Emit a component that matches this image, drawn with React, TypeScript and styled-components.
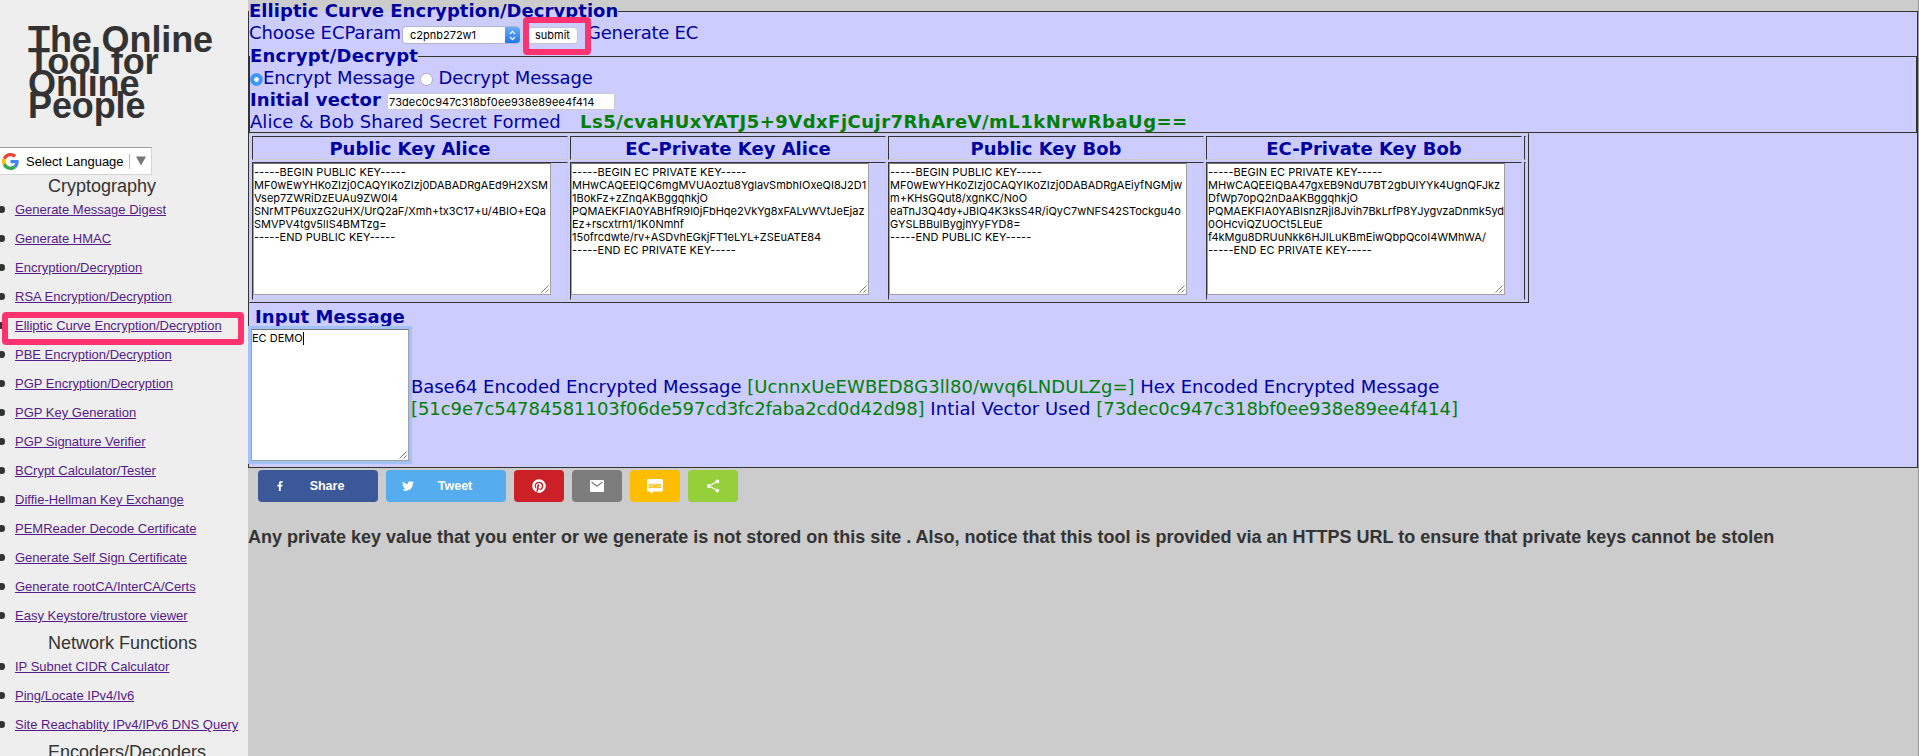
import React from "react";
import styled, { createGlobalStyle } from "styled-components";
import { FaPinterest } from "react-icons/fa";

const GlobalStyle = createGlobalStyle`
  html, body { margin: 0; padding: 0; overflow: hidden; }
  * { box-sizing: border-box; }
  body { font-family: "Liberation Sans", Helvetica, Arial, sans-serif; color: #333; }
`;

const Page = styled.div`
  display: flex;
  width: 100%;
  height: 756px;
  overflow: hidden;
  background: #ccc;
`;

const Sidebar = styled.aside`
  flex: none;
  width: 248px;
  height: 756px;
  overflow: hidden;
  background: #eee;
`;

const SiteTitle = styled.h1`
  margin: 0;
  padding: 29px 0 0 28px;
  height: 147px;
  width: 230px;
  font-size: 36px;
  line-height: 22px;
  font-weight: bold;
  letter-spacing: -0.1px;
`;

const LanguagePicker = styled.div`
  display: flex;
  align-items: center;
  width: 152px;
  height: 28px;
  background: #fff;
  border: 1px solid #d5d5d5;
  border-top-color: #9b9b9b;
  border-left: 0;
  font-size: 13px;
  color: #000;
  svg { margin-left: 2px; }
`;

const LanguageLabel = styled.span`
  width: 97px;
  margin-left: 7px;
  white-space: nowrap;
`;

const LanguageArrow = styled.span`
  margin-left: 6px;
  padding-left: 4px;
  height: 15px;
  border-left: 1px solid #bbb;
  display: flex;
  align-items: center;
`;

const SectionTitle = styled.h3`
  margin: 0;
  padding-left: 48px;
  height: 22px;
  font-size: 18px;
  line-height: 22px;
  font-weight: normal;
  white-space: nowrap;
`;

const LinkList = styled.ul`
  margin: 0;
  padding: 0;
  list-style: none;
`;

const LinkItem = styled.li`
  position: relative;
  height: 29px;
  padding-left: 15px;
  font-size: 13px;
  line-height: 25px;
  white-space: nowrap;
  &::before {
    content: "";
    position: absolute;
    left: -2px;
    top: 9px;
    width: 6.5px;
    height: 6.5px;
    border-radius: 50%;
    background: #333;
  }
`;

const NavLink = styled.a`
  color: #551a8b;
  text-decoration: underline;
`;

const Marker = styled.span<{ $x: number; $y: number; $w: number; $h: number }>`
  position: absolute;
  left: ${(p) => p.$x}px;
  top: ${(p) => p.$y}px;
  width: ${(p) => p.$w}px;
  height: ${(p) => p.$h}px;
  border: 6.5px solid #ff3370;
  border-radius: 4px;
  pointer-events: none;
`;

const Main = styled.main`
  flex: 1;
  min-width: 0;
  height: 756px;
  border-right: 1px solid #999;
`;

const Group = styled.fieldset<{ $height: number }>`
  margin: 0;
  padding: 0;
  min-width: 0;
  border: 1px solid #333;
  background: #ccf;
  color: #0000a0;
  font-family: "DejaVu Sans", Verdana, sans-serif;
  font-size: 18px;
  line-height: 22px;
  height: ${(p) => p.$height}px;
`;

const GroupTitle = styled.legend<{ $track: number }>`
  padding: 0;
  height: 22px;
  line-height: 22px;
  font-weight: bold;
  white-space: nowrap;
  letter-spacing: ${(p) => p.$track}px;
`;

const Row = styled.div<{ $tall?: boolean }>`
  position: relative;
  display: flex;
  align-items: flex-start;
  height: ${(p) => (p.$tall ? 23 : 22)}px;
  white-space: nowrap;
`;

const Txt = styled.span<{ $w?: number; $track?: number; $bold?: boolean; $green?: boolean }>`
  flex: none;
  width: ${(p) => (p.$w ? p.$w + "px" : "auto")};
  letter-spacing: ${(p) => p.$track ?? 0}px;
  font-weight: ${(p) => (p.$bold ? "bold" : "normal")};
  color: ${(p) => (p.$green ? "#008000" : "inherit")};
`;

const SelectBox = styled.div`
  display: flex;
  align-items: center;
  justify-content: space-between;
  width: 118px;
  height: 18px;
  margin-top: 4px;
  padding-left: 7px;
  overflow: hidden;
  border: 1px solid #b4b4c8;
  border-right: 0;
  border-radius: 4px;
  background: #fff;
  color: #000;
  font: 11px/16px Inter, sans-serif;
`;

const SelectArrows = styled.span`
  display: flex;
  align-items: center;
  justify-content: center;
  width: 15px;
  height: 18px;
  background: linear-gradient(#6bb0fa, #1a74f5);
`;

const SubmitButton = styled.span`
  display: flex;
  align-items: center;
  justify-content: center;
  width: 51px;
  height: 17px;
  margin: 5px 9px 0 7px;
  border: 1px solid #c4c4d4;
  border-radius: 4px;
  background: #fff;
  color: #000;
  font: 11px/15px Inter, sans-serif;
`;

const Radio = styled.span<{ $on?: boolean }>`
  flex: none;
  width: 13px;
  height: 13px;
  margin-top: 6px;
  border-radius: 50%;
  border: 1px solid ${(p) => (p.$on ? "#3b96fb" : "#b0b0bc")};
  background: ${(p) => (p.$on ? "radial-gradient(circle, #fff 0 2px, #3b99fc 2.6px)" : "#fff")};
`;

const VectorInput = styled.span`
  width: 228px;
  height: 17px;
  margin-top: 4px;
  padding-left: 1px;
  border: 1px solid #ccc;
  background: #fff;
  color: #000;
  font: 11px/16px Inter, sans-serif;
  letter-spacing: 0.1px;
`;

const KeyTable = styled.table`
  width: 1280px;
  height: 170px;
  table-layout: fixed;
  border-collapse: separate;
  border-spacing: 2px;
  border: 1px solid #333;
  border-left-color: #ccf;
  border-top-color: #ccc;
`;

const KeyHead = styled.th`
  height: 24px;
  padding: 1px 0 0;
  border: 1px solid #ccc;
  border-top-color: #333;
  border-left-color: #333;
  line-height: 21px;
`;

const KeyCell = styled.td`
  height: 138px;
  padding: 0;
  vertical-align: top;
  border: 1px solid #ccc;
  border-top-color: #333;
  border-left-color: #333;
`;

const TextBox = styled.div<{ $w: number; $focus?: boolean }>`
  position: relative;
  width: ${(p) => p.$w}px;
  height: 132px;
  padding: 2px 0 0;
  border: 1px solid #a0a0a0;
  border-top-color: #777;
  background: #fff;
  color: #000;
  font: 11px/13px Inter, sans-serif;
  white-space: pre;
  box-shadow: ${(p) => (p.$focus ? "0 0 0 3px #a1c2fc" : "none")};
`;

const Line = styled.div<{ $dashed?: boolean }>`
  height: 13px;
  letter-spacing: ${(p) => (p.$dashed ? 0.06 : 0)}px;
`;

const Grip = styled.svg`
  position: absolute;
  right: 1px;
  bottom: 1px;
`;

const Caret = styled.span`
  display: inline-block;
  width: 1px;
  height: 13px;
  background: #000;
  vertical-align: top;
`;

const MessageArea = styled.div`
  padding: 2px 0 0 2px;
  height: 164px;
`;

const MessageTitle = styled.div`
  padding-left: 4px;
  height: 24px;
  line-height: 23px;
  font-weight: bold;
  letter-spacing: 0.08px;
`;

const MessageRow = styled.div`
  display: flex;
  gap: 2px;
`;

const Result = styled.div`
  padding-top: 47px;
  white-space: nowrap;
`;

const ShareBar = styled.div`
  display: flex;
  gap: 8px;
  padding: 2px 0 0 10px;
`;

const ShareButton = styled.div<{ $bg: string; $wide?: boolean }>`
  display: flex;
  align-items: center;
  justify-content: ${(p) => (p.$wide ? "flex-start" : "center")};
  width: ${(p) => (p.$wide ? 120 : 50)}px;
  height: 32px;
  padding-left: ${(p) => (p.$wide ? 14 : 0)}px;
  border-radius: 4px;
  background: ${(p) => p.$bg};
  color: #fff;
  font-size: 12.5px;
  font-weight: bold;
`;

const ShareLabel = styled.span`
  width: 50px;
  margin-left: 14px;
  text-align: center;
`;

const Notice = styled.p`
  margin: 24px 0 0;
  font-size: 18px;
  line-height: 22px;
  font-weight: bold;
  white-space: nowrap;
`;

const cryptoLinks = [
  "Generate Message Digest",
  "Generate HMAC",
  "Encryption/Decryption",
  "RSA Encryption/Decryption",
  "Elliptic Curve Encryption/Decryption",
  "PBE Encryption/Decryption",
  "PGP Encryption/Decryption",
  "PGP Key Generation",
  "PGP Signature Verifier",
  "BCrypt Calculator/Tester",
  "Diffie-Hellman Key Exchange",
  "PEMReader Decode Certificate",
  "Generate Self Sign Certificate",
  "Generate rootCA/InterCA/Certs",
  "Easy Keystore/trustore viewer",
];

const networkLinks = [
  "IP Subnet CIDR Calculator",
  "Ping/Locate IPv4/Iv6",
  "Site Reachablity IPv4/IPv6 DNS Query",
];

const keys = [
  {
    title: "Public Key Alice",
    lines: [
      "-----BEGIN PUBLIC KEY-----",
      "MF0wEwYHKoZIzj0CAQYIKoZIzj0DABADRgAEd9H2XSM",
      "Vsep7ZWRiDzEUAu9ZW0l4",
      "SNrMTP6uxzG2uHX/UrQ2aF/Xmh+tx3C17+u/4BIO+EQa",
      "SMVPV4tgv5lIS4BMTzg=",
      "-----END PUBLIC KEY-----",
    ],
  },
  {
    title: "EC-Private Key Alice",
    lines: [
      "-----BEGIN EC PRIVATE KEY-----",
      "MHwCAQEEIQC6mgMVUAoztu8YglavSmbhIOxeQI8J2D1",
      "1BokFz+zZnqAKBggqhkjO",
      "PQMAEKFIA0YABHfR9l0jFbHqe2VkYg8xFALvWVtJeEjaz",
      "Ez+rscxtrh1/1K0Nmhf",
      "15ofrcdwte/rv+ASDvhEGkjFT1eLYL+ZSEuATE84",
      "-----END EC PRIVATE KEY-----",
    ],
  },
  {
    title: "Public Key Bob",
    lines: [
      "-----BEGIN PUBLIC KEY-----",
      "MF0wEwYHKoZIzj0CAQYIKoZIzj0DABADRgAEiyfNGMjw",
      "m+KHsGQut8/xgnKC/NoO",
      "eaTnJ3Q4dy+JBlQ4K3ksS4R/iQyC7wNFS42STockgu4o",
      "GYSLBBuIBygjhYyFYD8=",
      "-----END PUBLIC KEY-----",
    ],
  },
  {
    title: "EC-Private Key Bob",
    lines: [
      "-----BEGIN EC PRIVATE KEY-----",
      "MHwCAQEEIQBA47gxEB9NdU7BT2gbUIYYk4UgnQFJkz",
      "DfWp7opQ2nDaAKBggqhkjO",
      "PQMAEKFIA0YABIsnzRjl8Jvih7BkLrfP8YJygvzaDnmk5yd",
      "0OHcviQZUOCt5LEuE",
      "f4kMgu8DRUuNkk6HJILuKBmEiwQbpQcoI4WMhWA/",
      "-----END EC PRIVATE KEY-----",
    ],
  },
];

const ResizeGrip = () => (
  <Grip width="8" height="8" viewBox="0 0 8 8">
    <path d="M0.5 7.5 L7.5 0.5 M4.5 7.5 L7.5 4.5" stroke="#555" strokeWidth="0.8" fill="none" />
  </Grip>
);

const GoogleLogo = () => (
  <svg width="17" height="17" viewBox="0 0 48 48">
    <path fill="#EA4335" d="M24 9.5c3.54 0 6.71 1.22 9.21 3.6l6.85-6.85C35.9 2.38 30.47 0 24 0 14.62 0 6.51 5.38 2.56 13.22l7.98 6.19C12.43 13.72 17.74 9.5 24 9.5z" />
    <path fill="#4285F4" d="M46.98 24.55c0-1.57-.15-3.09-.38-4.55H24v9.02h12.94c-.58 2.96-2.26 5.48-4.78 7.18l7.73 6c4.51-4.18 7.09-10.36 7.09-17.65z" />
    <path fill="#FBBC05" d="M10.53 28.59c-.48-1.45-.76-2.99-.76-4.59s.27-3.14.76-4.59l-7.98-6.19C.92 16.46 0 20.12 0 24c0 3.88.92 7.54 2.56 10.78l7.97-6.19z" />
    <path fill="#34A853" d="M24 48c6.48 0 11.93-2.13 15.89-5.81l-7.73-6c-2.15 1.45-4.92 2.3-8.16 2.3-6.26 0-11.57-4.22-13.47-9.91l-7.98 6.19C6.51 42.62 14.62 48 24 48z" />
  </svg>
);

const icons = {
  facebook: "M17.78 27.5V17.008h3.522l.527-4.09h-4.05v-2.61c0-1.182.33-1.99 2.023-1.99h2.166V4.66c-.375-.05-1.66-.16-3.155-.16-3.123 0-5.26 1.905-5.26 5.405v3.016h-3.53v4.09h3.53V27.5h4.223z",
  twitter: "M28 8.557a9.913 9.913 0 0 1-2.828.775 4.93 4.93 0 0 0 2.166-2.725 9.738 9.738 0 0 1-3.13 1.194 4.92 4.92 0 0 0-3.593-1.55 4.924 4.924 0 0 0-4.794 6.049c-4.09-.21-7.72-2.17-10.15-5.15a4.942 4.942 0 0 0-.665 2.477c0 1.71.87 3.214 2.19 4.1a4.968 4.968 0 0 1-2.23-.616v.06c0 2.39 1.7 4.38 3.952 4.83-.414.115-.85.174-1.297.174-.318 0-.626-.03-.928-.086a4.935 4.935 0 0 0 4.6 3.42 9.893 9.893 0 0 1-6.114 2.107c-.398 0-.79-.023-1.175-.068a13.953 13.953 0 0 0 7.55 2.213c9.056 0 14.01-7.507 14.01-14.013 0-.213-.005-.426-.015-.637.96-.695 1.795-1.56 2.455-2.55z",
};

const Links = ({ items, marked }: { items: string[]; marked?: number }) => (
  <LinkList>
    {items.map((label, i) => (
      <LinkItem key={label}>
        <NavLink>{label}</NavLink>
        {i === marked && <Marker $x={2} $y={-1} $w={241.5} $h={33} />}
      </LinkItem>
    ))}
  </LinkList>
);

export default function App() {
  return (
    <Page>
      <GlobalStyle />
      <Sidebar>
        <SiteTitle>The Online<br />Tool for<br />Online<br />People</SiteTitle>
        <LanguagePicker>
          <GoogleLogo />
          <LanguageLabel>Select Language</LanguageLabel>
          <LanguageArrow>
            <svg width="10" height="10" viewBox="0 0 10 10"><path d="M0 0.5H10L5 9.5Z" fill="#767676" /></svg>
          </LanguageArrow>
        </LanguagePicker>
        <SectionTitle>Cryptography</SectionTitle>
        <Links items={cryptoLinks} marked={4} />
        <SectionTitle>Network Functions</SectionTitle>
        <Links items={networkLinks} />
        <SectionTitle>Encoders/Decoders</SectionTitle>
      </Sidebar>
      <Main>
        <Group $height={468}>
          <GroupTitle $track={0.05}>Elliptic Curve Encryption/Decryption</GroupTitle>
          <Row $tall>
            <Txt $w={153} $track={-0.08}>Choose ECParam</Txt>
            <SelectBox>
              c2pnb272w1
              <SelectArrows>
                <svg width="7" height="11" viewBox="0 0 7 11">
                  <path d="M1 4L3.5 1.3L6 4M1 7L3.5 9.7L6 7" fill="none" stroke="#fff" strokeWidth="1.2" />
                </svg>
              </SelectArrows>
            </SelectBox>
            <SubmitButton>submit</SubmitButton>
            <Txt $track={-0.25}>Generate EC</Txt>
            <Marker $x={273.5} $y={-5} $w={68} $h={38} />
          </Row>
          <Group $height={88}>
            <GroupTitle $track={0.25}>Encrypt/Decrypt</GroupTitle>
            <Row>
              <Radio $on />
              <Txt $w={157} $track={-0.12}>Encrypt Message</Txt>
              <Radio />
              <Txt $track={-0.12}>&nbsp;Decrypt Message</Txt>
            </Row>
            <Row>
              <Txt $bold $w={137} $track={0.1}>Initial vector</Txt>
              <VectorInput>73dec0c947c318bf0ee938e89ee4f414</VectorInput>
            </Row>
            <Row>
              <Txt $w={330} $track={0.04}>Alice &amp; Bob Shared Secret Formed</Txt>
              <Txt $bold $green $track={0.48}>Ls5/cvaHUxYATJ5+9VdxFjCujr7RhAreV/mL1kNrwRbaUg==</Txt>
            </Row>
          </Group>
          <KeyTable>
            <colgroup>
              <col width="316" /><col width="316" /><col width="316" /><col width="316" /><col width="2" />
            </colgroup>
            <tbody>
              <tr>
                {keys.map((k) => <KeyHead key={k.title}>{k.title}</KeyHead>)}
                <KeyHead />
              </tr>
              <tr>
                {keys.map((k) => (
                  <KeyCell key={k.title}>
                    <TextBox $w={298}>
                      {k.lines.map((t) => <Line key={t} $dashed={t.startsWith("-----")}>{t}</Line>)}
                      <ResizeGrip />
                    </TextBox>
                  </KeyCell>
                ))}
                <KeyCell />
              </tr>
            </tbody>
          </KeyTable>
          <MessageArea>
            <MessageTitle>Input Message</MessageTitle>
            <MessageRow>
              <TextBox $w={158} $focus>
                <Line>EC DEMO<Caret /></Line>
                <ResizeGrip />
              </TextBox>
              <Result>
                <div>
                  <Txt $track={-0.05}>Base64 Encoded Encrypted Message </Txt>
                  <Txt $green $track={0.07}>[UcnnxUeEWBED8G3ll80/wvq6LNDULZg=]</Txt>
                  <Txt $track={-0.05}> Hex Encoded Encrypted Message</Txt>
                </div>
                <div>
                  <Txt $green $track={-0.05}>[51c9e7c54784581103f06de597cd3fc2faba2cd0d42d98]</Txt>
                  <Txt $track={0.08}> Intial Vector Used </Txt>
                  <Txt $green $track={-0.05}>[73dec0c947c318bf0ee938e89ee4f414]</Txt>
                </div>
              </Result>
            </MessageRow>
          </MessageArea>
        </Group>
        <ShareBar>
          <ShareButton $bg="#3b5998" $wide>
            <svg width="16" height="14" viewBox="0 0 32 32"><path fill="#fff" d={icons.facebook} /></svg>
            <ShareLabel>Share</ShareLabel>
          </ShareButton>
          <ShareButton $bg="#55acee" $wide>
            <svg width="16" height="16" viewBox="0 0 32 32"><path fill="#fff" d={icons.twitter} /></svg>
            <ShareLabel>Tweet</ShareLabel>
          </ShareButton>
          <ShareButton $bg="#cb2027">
            <FaPinterest size={14} />
          </ShareButton>
          <ShareButton $bg="#7d7d7d">
            <svg width="14" height="12" viewBox="0 0 14 12">
              <rect width="14" height="12" rx="1" fill="#fff" />
              <path d="M1.5 2L7 6.3L12.5 2" fill="none" stroke="#7d7d7d" strokeWidth="1.1" />
            </svg>
          </ShareButton>
          <ShareButton $bg="#ffbd00">
            <svg width="16" height="15" viewBox="0 0 16 15">
              <path d="M1.5 0H14.5Q16 0 16 1.5V11Q16 12.5 14.5 12.5H6L4.5 15L3 12.5H1.5Q0 12.5 0 11V1.5Q0 0 1.5 0Z" fill="#fff" />
              <text x="8" y="8.6" textAnchor="middle" fontSize="6" fontWeight="bold" fontFamily="Liberation Sans, sans-serif" fill="#ffbd00" stroke="#ffbd00" strokeWidth="0.3">SMS</text>
            </svg>
          </ShareButton>
          <ShareButton $bg="#95d03a">
            <svg width="14" height="14" viewBox="0 0 14 14">
              <path d="M11 2.7L3 7L11 11.3" fill="none" stroke="#fff" strokeWidth="1.3" />
              <circle cx="11.3" cy="2.4" r="1.9" fill="#fff" />
              <circle cx="2.8" cy="7" r="1.9" fill="#fff" />
              <circle cx="11.3" cy="11.6" r="1.9" fill="#fff" />
            </svg>
          </ShareButton>
        </ShareBar>
        <Notice>Any private key value that you enter or we generate is not stored on this site . Also, notice that this tool is provided via an HTTPS URL to ensure that private keys cannot be stolen</Notice>
      </Main>
    </Page>
  );
}
